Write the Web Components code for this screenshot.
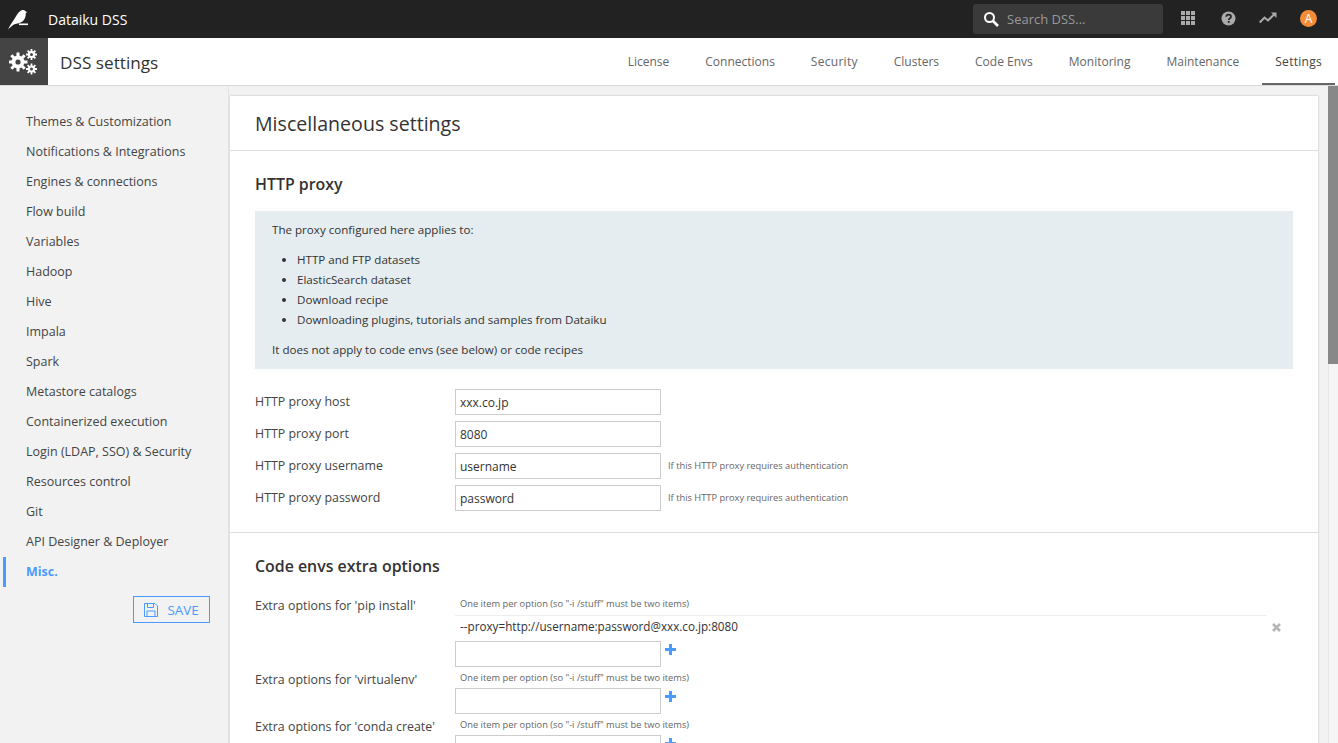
<!DOCTYPE html>
<html>
<head>
<meta charset="utf-8">
<title>DSS settings</title>
<style>
  html, body {
    margin: 0;
    height: 100%;
    overflow: hidden;
    font-family: "Open Sans", "Noto Sans", sans-serif;
    color: #333;
    background: #f2f2f2;
  }
  dss-page { height: 743px; }
</style>
</head>
<body>
<dss-page>
  <dss-topbar slot="top"></dss-topbar>
  <dss-subheader slot="top" heading="DSS settings">
    <dss-tab>License</dss-tab>
    <dss-tab>Connections</dss-tab>
    <dss-tab wide>Security</dss-tab>
    <dss-tab>Clusters</dss-tab>
    <dss-tab>Code Envs</dss-tab>
    <dss-tab>Monitoring</dss-tab>
    <dss-tab>Maintenance</dss-tab>
    <dss-tab wide active>Settings</dss-tab>
  </dss-subheader>
  <dss-sidebar slot="side">
    <dss-nav-item>Themes &amp; Customization</dss-nav-item>
    <dss-nav-item>Notifications &amp; Integrations</dss-nav-item>
    <dss-nav-item>Engines &amp; connections</dss-nav-item>
    <dss-nav-item>Flow build</dss-nav-item>
    <dss-nav-item>Variables</dss-nav-item>
    <dss-nav-item>Hadoop</dss-nav-item>
    <dss-nav-item>Hive</dss-nav-item>
    <dss-nav-item>Impala</dss-nav-item>
    <dss-nav-item>Spark</dss-nav-item>
    <dss-nav-item>Metastore catalogs</dss-nav-item>
    <dss-nav-item>Containerized execution</dss-nav-item>
    <dss-nav-item>Login (LDAP, SSO) &amp; Security</dss-nav-item>
    <dss-nav-item>Resources control</dss-nav-item>
    <dss-nav-item>Git</dss-nav-item>
    <dss-nav-item>API Designer &amp; Deployer</dss-nav-item>
    <dss-nav-item active>Misc.</dss-nav-item>
  </dss-sidebar>
  <dss-card slot="main" heading="Miscellaneous settings">
    <dss-section heading="HTTP proxy">
      <dss-note>
        <p>The proxy configured here applies to:</p>
        <ul>
          <li>HTTP and FTP datasets</li>
          <li>ElasticSearch dataset</li>
          <li>Download recipe</li>
          <li>Downloading plugins, tutorials and samples from Dataiku</li>
        </ul>
        <p>It does not apply to code envs (see below) or code recipes</p>
      </dss-note>
      <dss-field label="HTTP proxy host" value="xxx.co.jp"></dss-field>
      <dss-field label="HTTP proxy port" value="8080"></dss-field>
      <dss-field label="HTTP proxy username" value="username" help="If this HTTP proxy requires authentication"></dss-field>
      <dss-field label="HTTP proxy password" value="password" help="If this HTTP proxy requires authentication"></dss-field>
    </dss-section>
    <dss-section heading="Code envs extra options">
      <dss-list-field label="Extra options for 'pip install'" item="--proxy=http://username:password@xxx.co.jp:8080"></dss-list-field>
      <dss-list-field label="Extra options for 'virtualenv'"></dss-list-field>
      <dss-list-field label="Extra options for 'conda create'"></dss-list-field>
    </dss-section>
  </dss-card>
</dss-page>

<script>
function define(name, html, props) {
  const tpl = document.createElement("template");
  tpl.innerHTML = html;
  customElements.define(name, class extends HTMLElement {
    constructor() {
      super();
      this.attachShadow({ mode: "open" }).appendChild(tpl.content.cloneNode(true));
    }
    connectedCallback() {
      const root = this.shadowRoot;
      (props || []).forEach((p) => {
        root.querySelectorAll("[data-" + p + "]").forEach((el) => {
          const v = this.getAttribute(p);
          if (el.tagName === "INPUT") el.value = v || "";
          else el.textContent = v || "";
        });
      });
    }
  });
}

define("dss-page", `
  <style>
    :host { display: flex; flex-direction: column; overflow: hidden; }
    .body { flex: 1; display: flex; min-height: 0; }
    .content { flex: 1; min-width: 0; padding: 10px 10px 0 1px; overflow: hidden; }
    .bar { width: 10px; box-sizing: border-box; background: #f5f5f5; border-left: 1px solid #e6e6e6; }
    .thumb { height: 278px; margin-left: -1px; background: #888; }
  </style>
  <slot name="top"></slot>
  <div class="body">
    <slot name="side"></slot>
    <div class="content"><slot name="main"></slot></div>
    <div class="bar"><div class="thumb"></div></div>
  </div>
`);

define("dss-topbar", `
  <style>
    :host { display: flex; align-items: center; height: 38px; background: #222; color: #fff; }
    .logo { width: 48px; box-sizing: border-box; padding: 1px 0 0 8px; display: flex; }
    .brand { font-size: 14px; flex: 1; }
    .search { width: 190px; height: 30px; box-sizing: border-box; background: #3a3a3a; border-radius: 3px;
      display: flex; align-items: center; gap: 8px; padding-left: 10px; color: #999; font-size: 13px; margin-right: 5px; }
    .icon { width: 40px; display: flex; justify-content: center; align-items: center; padding-bottom: 2px; }
    .avatar { width: 17px; height: 17px; border-radius: 50%; background: #f28c38; color: #fff; font-size: 12px;
      display: flex; align-items: center; justify-content: center; }
    .end { width: 50px; justify-content: flex-start; padding: 0 0 1px 12px; box-sizing: border-box; }
  </style>
  <div class="logo">
    <svg width="21" height="21" viewBox="8 9 21 21">
      <path d="M8 29.5 C10 25 13 21 15 18 C17 14.5 19 11 22.5 10 C24 9.6 25.5 10.5 25.7 11.5 L27.5 12.3 L25.8 12.8 C26 16 25 19.5 22.5 21.5 C20 23 17 23.5 14.5 24.2 C12 25.5 10 27.5 8 29.5 Z" fill="#fff"/>
      <rect x="19" y="23.5" width="9" height="1.6" fill="#fff"/>
    </svg>
  </div>
  <div class="brand">Dataiku DSS</div>
  <div class="search">
    <svg width="16" height="16" viewBox="0 0 16 16" fill="none" stroke="#fff" stroke-width="2">
      <circle cx="6.5" cy="6.5" r="4.5"/><path d="M10 10 L15 15" stroke-width="2.6"/>
    </svg>
    <span>Search DSS...</span>
  </div>
  <div class="icon">
    <svg width="14" height="14" viewBox="0 0 14 14" fill="#aaa">
      <rect x="0" y="0" width="4" height="4"/><rect x="5" y="0" width="4" height="4"/><rect x="10" y="0" width="4" height="4"/>
      <rect x="0" y="5" width="4" height="4"/><rect x="5" y="5" width="4" height="4"/><rect x="10" y="5" width="4" height="4"/>
      <rect x="0" y="10" width="4" height="4"/><rect x="5" y="10" width="4" height="4"/><rect x="10" y="10" width="4" height="4"/>
    </svg>
  </div>
  <div class="icon">
    <svg width="15" height="15" viewBox="0 0 15 15">
      <circle cx="7.5" cy="7.5" r="7" fill="#aaa"/>
      <path d="M5.2 5.8 C5.3 4.4 6.3 3.7 7.6 3.7 C9 3.7 10 4.5 10 5.7 C10 7.3 7.8 7.3 7.8 9" fill="none" stroke="#222" stroke-width="1.7"/>
      <rect x="6.9" y="10" width="1.8" height="1.8" fill="#222"/>
    </svg>
  </div>
  <div class="icon">
    <svg width="18" height="12" viewBox="0 0 18 12" fill="none" stroke="#aaa" stroke-width="2">
      <path d="M0.7 10.5 L5.5 5.5 L9 8.5 L15 2.5"/><path d="M12 0.5 L17.5 0.5 L17.5 6 Z" stroke="none" fill="#aaa"/>
    </svg>
  </div>
  <div class="icon end"><div class="avatar">A</div></div>
`);

define("dss-subheader", `
  <style>
    :host { display: flex; height: 48px; box-sizing: border-box; background: #fff; border-bottom: 1px solid #d9d9d9; }
    .gear { width: 48px; background: #444; display: flex; align-items: center; justify-content: center; }
    h1 { font-size: 17.2px; font-weight: 400; margin: 0 0 0 12px; line-height: 49px; flex: 1; color: #333; }
    nav { display: flex; margin-right: 3px; }
  </style>
  <div class="gear">
    <svg width="30" height="26" viewBox="0 0 30 26" fill="#fff">
      <circle cx="9" cy="13" r="6.5"/>
      <g stroke="#fff" stroke-width="3">
        <path d="M9 3.5 V22.5 M-0.5 13 H18.5 M2.3 6.3 L15.7 19.7 M15.7 6.3 L2.3 19.7"/>
      </g>
      <circle cx="9" cy="13" r="2.6" fill="#444"/>
      <circle cx="22.5" cy="5.5" r="3.6"/>
      <g stroke="#fff" stroke-width="1.8"><path d="M22.5 0 V11 M17 5.5 H28 M18.6 1.6 L26.4 9.4 M26.4 1.6 L18.6 9.4"/></g>
      <circle cx="22.5" cy="5.5" r="1.5" fill="#444"/>
      <circle cx="22.5" cy="20" r="3.6"/>
      <g stroke="#fff" stroke-width="1.8"><path d="M22.5 14.5 V25.5 M17 20 H28 M18.6 16.1 L26.4 23.9 M26.4 16.1 L18.6 23.9"/></g>
      <circle cx="22.5" cy="20" r="1.5" fill="#444"/>
    </svg>
  </div>
  <h1 data-heading></h1>
  <nav><slot></slot></nav>
`, ["heading"]);

define("dss-tab", `
  <style>
    :host { display: flex; align-items: center; padding: 0 13px; margin-left: 10px; height: 47px; box-sizing: border-box;
      font-size: 12px; color: #666; }
    :host([wide]) { letter-spacing: .28px; }
    :host([active]) { color: #444; box-shadow: inset 0 -2px 0 #666; }
  </style>
  <slot></slot>
`);

define("dss-sidebar", `
  <style>
    :host { display: block; width: 229px; flex: none; background: #f2f2f2; box-sizing: border-box;
      border-right: 1px solid #e4e4e4; padding-top: 21px; }
    .actions { display: flex; justify-content: flex-end; padding: 9px 18px 0 0; }
    button { display: flex; align-items: center; gap: 9px; height: 27px; width: 77px; box-sizing: border-box; justify-content: center;
      background: transparent; border: 1px solid #4a9bff; color: #4a9bff; font: inherit; font-size: 13.4px; padding: 0; }
  </style>
  <slot></slot>
  <div class="actions">
    <button>
      <svg width="14" height="14" viewBox="0 0 14 14" fill="none" stroke="#4a9bff">
        <path d="M0.5 0.5 H11 L13.5 3 V13.5 H0.5 Z"/><path d="M3.5 0.5 V4.5 H9.5 V0.5"/><path d="M3 13.5 V8 H11 V13.5"/>
      </svg>
      SAVE
    </button>
  </div>
`);

define("dss-nav-item", `
  <style>
    :host { display: block; height: 30px; line-height: 30px; font-size: 12.5px; color: #444; margin-left: 3px; padding-left: 20px; border-left: 3px solid transparent; box-sizing: border-box; }
    :host([active]) { color: #4a9bff; font-weight: 700; border-left-color: #4a9bff; }
  </style>
  <slot></slot>
`);

define("dss-card", `
  <style>
    :host { display: block; background: #fff; box-shadow: 0 0 2px rgba(0,0,0,.25); }
    h2 { font-size: 19.6px; font-weight: 400; margin: 0; padding: 0 25px; height: 54px; line-height: 56px; color: #333; border-bottom: 1px solid #ddd; }
  </style>
  <h2 data-heading></h2>
  <slot></slot>
`, ["heading"]);

define("dss-section", `
  <style>
    :host { display: block; padding: 0 25px 15px; border-bottom: 1px solid #ddd; }
    h3 { font-size: 15.9px; font-weight: 600; margin: 0; height: 60px; line-height: 67px; color: #333; }
  </style>
  <h3 data-heading></h3>
  <slot></slot>
`, ["heading"]);

define("dss-note", `
  <style>
    :host { display: block; background: #e5edf0; padding: 9px 17px 9px; font-size: 11.6px; line-height: 20px; color: #333; margin-bottom: 20px; }
    ::slotted(p) { margin: 0 0 10px; }
    ::slotted(p:last-child) { margin: 0; }
    ::slotted(ul) { margin: 0 0 10px; padding-left: 25px; }
  </style>
  <slot></slot>
`);

define("dss-field", `
  <style>
    :host { display: flex; align-items: flex-start; height: 26px; margin-bottom: 6px; font-size: 12.4px; color: #444; }
    label { width: 200px; line-height: 26px; flex: none; }
    input { width: 206px; height: 26px; box-sizing: border-box; border: 1px solid #ccc; padding: 1px 4px 0; font: inherit; font-size: 12px; color: #333; outline: none; border-radius: 0; }
    small { font-size: 9.3px; color: #666; margin-left: 7px; line-height: 26px; }
  </style>
  <label data-label></label>
  <input data-value type="text">
  <small data-help></small>
`, ["label", "value", "help"]);

define("dss-list-field", `
  <style>
    :host { display: flex; align-items: flex-start; font-size: 12.4px; color: #444; }
    label { width: 200px; flex: none; line-height: 20px; margin-top: 3px; }
    .col { flex: 1; min-width: 0; }
    .hint { font-size: 9.3px; color: #666; padding-left: 5px; height: 21px; line-height: 21px; }
    .item { border-top: 1px solid #eee; margin-top: 1px; height: 26px; line-height: 21px; padding-left: 5px; font-size: 11.7px; color: #333; width: 812px; box-sizing: border-box; position: relative; }
    :host(:not([item])) .item { display: none; }
    .del { position: absolute; left: 817px; top: 7px; }
    .row { display: flex; align-items: flex-start; gap: 4px; height: 26px; }
    input { width: 206px; height: 26px; box-sizing: border-box; border: 1px solid #ccc; outline: none; }
    .plus { margin-top: 3px; }
  </style>
  <label data-label></label>
  <div class="col">
    <div class="hint">One item per option (so "-i /stuff" must be two items)</div>
    <div class="item"><span data-item></span>
      <svg class="del" width="9" height="9" viewBox="0 0 9 9" stroke="#b5b5b5" stroke-width="2.6"><path d="M1 1 L8 8 M8 1 L1 8"/></svg>
    </div>
    <div class="row">
      <input type="text">
      <svg class="plus" width="11" height="11" viewBox="0 0 11 11" stroke="#4a9bff" stroke-width="3"><path d="M5.5 0 V11 M0 5.5 H11"/></svg>
    </div>
  </div>
`, ["label", "item"]);
</script>
</body>
</html>
